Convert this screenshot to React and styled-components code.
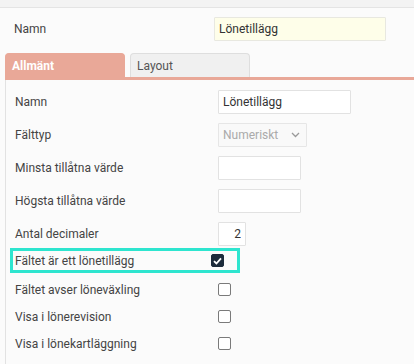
import React from 'react';
import styled, { createGlobalStyle } from 'styled-components';

const GlobalStyle = createGlobalStyle`
	body {
		margin: 0;
		background: #fbfbfb;
		font-family: Roboto, 'Liberation Sans', sans-serif;
		font-size: 12px;
		color: #444;
	}
`;

const Page = styled.div`
	width: 414px;
	height: 364px;
	overflow: hidden;
`;

const TopStrip = styled.div`
	height: 7px;
	background: #f3f3f3;
	border-bottom: 1px solid #e4e4e4;
`;

const Header = styled.div`
	display: flex;
	align-items: center;
	padding: 9px 0 0 14px;
`;

const Label = styled.label`
	width: ${(p) => p.$width || '203px'};
	flex-shrink: 0;
	color: #444;
`;

const TextInput = styled.input`
	box-sizing: border-box;
	width: ${(p) => p.$width};
	height: 24px;
	padding: 0 4px;
	border: 1px solid ${(p) => (p.$tinted ? '#e8e8e0' : '#e2e2e2')};
	border-radius: 1px;
	background: ${(p) => (p.$tinted ? '#fefee9' : '#fff')};
	font: inherit;
	color: #333;
	text-align: ${(p) => (p.$right ? 'right' : 'left')};
	outline: none;
`;

const Tabs = styled.div`
	display: flex;
	gap: 5px;
	margin: 12px 0 0 5px;
	border-bottom: 3px solid #e9a898;
`;

const Tab = styled.div`
	box-sizing: border-box;
	width: 120px;
	height: 24px;
	padding: 0 6px;
	display: flex;
	align-items: center;
	border-radius: 4px 4px 0 0;
	background: ${(p) => (p.$active ? '#e9a898' : '#f0f0f0')};
	border: 1px solid ${(p) => (p.$active ? '#e9a898' : '#dedede')};
	border-bottom: none;
	color: ${(p) => (p.$active ? '#fff' : '#555')};
	font-weight: ${(p) => (p.$active ? 700 : 400)};
`;

const Panel = styled.div`
	margin-left: 5px;
	border-left: 1px solid #e2e2e2;
	padding: 10px 0 20px 9px;
	display: flex;
	flex-direction: column;
`;

const FieldRow = styled.div`
	display: flex;
	align-items: center;
	height: 24px;
	margin-bottom: 9px;
`;

const CheckRow = styled.div`
	box-sizing: border-box;
	display: flex;
	align-items: center;
	height: ${(p) => (p.$highlight ? '25px' : '27px')};
	width: ${(p) => (p.$highlight ? '230px' : 'auto')};
	margin: ${(p) => (p.$highlight ? '-7px 0 3px -5px' : '0')};
	padding-left: ${(p) => (p.$highlight ? '2px' : '0')};
	border: ${(p) => (p.$highlight ? '3px solid #2ee5cf' : 'none')};
`;

const SelectWrap = styled.div`
	position: relative;
	width: 89px;
	height: 24px;
`;

const Select = styled.select`
	box-sizing: border-box;
	width: 100%;
	height: 100%;
	appearance: none;
	padding: 0 4px;
	border: 1px solid #e6e6e6;
	border-radius: 1px;
	background: #f9f9f9;
	font: inherit;
	color: #aaa;
	opacity: 1;
`;

const Chevron = styled.svg`
	position: absolute;
	right: 7px;
	top: 9px;
	pointer-events: none;
`;

const Box = styled.span`
	box-sizing: border-box;
	width: 13px;
	height: 13px;
	border-radius: 2px;
	border: 1px solid ${(p) => (p.$checked ? '#1c2b3b' : '#7a7a7a')};
	background: ${(p) => (p.$checked ? '#1c2b3b' : '#fff')};
	display: flex;
	align-items: center;
	justify-content: center;
`;

const Check = ({ checked }) => (
	<Box $checked={checked}>
		{checked && (
			<svg width='9' height='8' viewBox='0 0 9 8'>
				<path d='M1 4.2 L3.4 6.5 L8 1.3' fill='none' stroke='#fff' strokeWidth='1.8' />
			</svg>
		)}
	</Box>
);

const checks = [
	{ label: 'Fältet är ett lönetillägg', checked: true, highlight: true },
	{ label: 'Fältet avser löneväxling' },
	{ label: 'Visa i lönerevision' },
	{ label: 'Visa i lönekartläggning' },
];

const App = () => {
	return (
		<Page>
			<GlobalStyle />
			<TopStrip />
			<Header>
				<Label $width='200px'>Namn</Label>
				<TextInput $tinted $width='172px' defaultValue='Lönetillägg' />
			</Header>
			<Tabs>
				<Tab $active>Allmänt</Tab>
				<Tab>Layout</Tab>
			</Tabs>
			<Panel>
				<FieldRow>
					<Label>Namn</Label>
					<TextInput $width='133px' defaultValue='Lönetillägg' />
				</FieldRow>
				<FieldRow>
					<Label>Fälttyp</Label>
					<SelectWrap>
						<Select disabled defaultValue='num'>
							<option value='num'>Numeriskt</option>
						</Select>
						<Chevron width='9' height='6' viewBox='0 0 9 6'>
							<path d='M1 1 L4.5 4.5 L8 1' fill='none' stroke='#999' strokeWidth='1.3' />
						</Chevron>
					</SelectWrap>
				</FieldRow>
				<FieldRow>
					<Label>Minsta tillåtna värde</Label>
					<TextInput $width='83px' />
				</FieldRow>
				<FieldRow>
					<Label>Högsta tillåtna värde</Label>
					<TextInput $width='83px' />
				</FieldRow>
				<FieldRow>
					<Label>Antal decimaler</Label>
					<TextInput $width='28px' $right defaultValue='2' />
				</FieldRow>
				{checks.map((c) => (
					<CheckRow key={c.label} $highlight={c.highlight}>
						<Label $width={c.highlight ? '196px' : '203px'}>{c.label}</Label>
						<Check checked={c.checked} />
					</CheckRow>
				))}
			</Panel>
		</Page>
	);
};

export default App;
